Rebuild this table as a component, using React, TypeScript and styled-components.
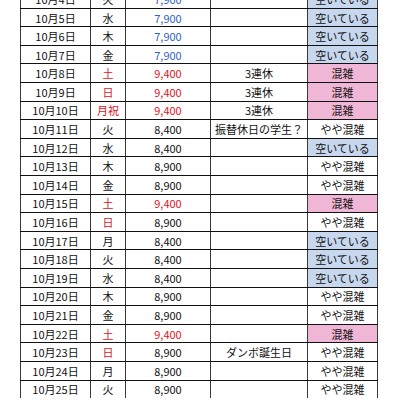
import React from "react";
import styled, { createGlobalStyle } from "styled-components";

const Global = createGlobalStyle`
  html, body { margin: 0; padding: 0; background: #fff; overflow: hidden; }
  body { font-family: "Noto Sans CJK JP", "Noto Sans", sans-serif; }
`;

type Tone = "black" | "blue" | "red";
type Status = "空いている" | "混雑" | "やや混雑";

interface Row {
  date: string;
  day: string;
  dayRed?: boolean;
  price: string;
  priceTone: Tone;
  note?: string;
  status: Status;
}

const rows: Row[] = [
  { date: "10月4日", day: "火", price: "7,900", priceTone: "blue", status: "空いている" },
  { date: "10月5日", day: "水", price: "7,900", priceTone: "blue", status: "空いている" },
  { date: "10月6日", day: "木", price: "7,900", priceTone: "blue", status: "空いている" },
  { date: "10月7日", day: "金", price: "7,900", priceTone: "blue", status: "空いている" },
  { date: "10月8日", day: "土", dayRed: true, price: "9,400", priceTone: "red", note: "3連休", status: "混雑" },
  { date: "10月9日", day: "日", dayRed: true, price: "9,400", priceTone: "red", note: "3連休", status: "混雑" },
  { date: "10月10日", day: "月祝", dayRed: true, price: "9,400", priceTone: "red", note: "3連休", status: "混雑" },
  { date: "10月11日", day: "火", price: "8,400", priceTone: "black", note: "振替休日の学生？", status: "やや混雑" },
  { date: "10月12日", day: "水", price: "8,400", priceTone: "black", status: "空いている" },
  { date: "10月13日", day: "木", price: "8,900", priceTone: "black", status: "やや混雑" },
  { date: "10月14日", day: "金", price: "8,900", priceTone: "black", status: "やや混雑" },
  { date: "10月15日", day: "土", dayRed: true, price: "9,400", priceTone: "red", status: "混雑" },
  { date: "10月16日", day: "日", dayRed: true, price: "8,900", priceTone: "black", status: "やや混雑" },
  { date: "10月17日", day: "月", price: "8,400", priceTone: "black", status: "空いている" },
  { date: "10月18日", day: "火", price: "8,400", priceTone: "black", status: "空いている" },
  { date: "10月19日", day: "水", price: "8,400", priceTone: "black", status: "空いている" },
  { date: "10月20日", day: "木", price: "8,900", priceTone: "black", status: "やや混雑" },
  { date: "10月21日", day: "金", price: "8,900", priceTone: "black", status: "やや混雑" },
  { date: "10月22日", day: "土", dayRed: true, price: "9,400", priceTone: "red", status: "混雑" },
  { date: "10月23日", day: "日", dayRed: true, price: "8,900", priceTone: "black", note: "ダンボ誕生日", status: "やや混雑" },
  { date: "10月24日", day: "月", price: "8,900", priceTone: "black", status: "やや混雑" },
  { date: "10月25日", day: "火", price: "8,900", priceTone: "black", status: "やや混雑" },
];

const toneColor: Record<Tone, string> = {
  black: "#111",
  blue: "#2f64c4",
  red: "#e0141e",
};

const statusFill: Record<Status, string> = {
  "空いている": "#c6d7ee",
  "混雑": "#efb6d6",
  "やや混雑": "#ffffff",
};

const Sheet = styled.div`
  margin: -10.9px 0 0 20px;
  width: 358px;
  display: flex;
  flex-direction: column;
`;

const TableRow = styled.div`
  display: grid;
  grid-template-columns: 70px 35px 85px 97px 71px;
  height: 18.6px;
  border-top: 1px solid #111;
  box-sizing: border-box;
`;

const Cell = styled.div<{ $color?: string; $fill?: string; $last?: boolean }>`
  display: flex;
  align-items: center;
  justify-content: center;
  border-left: 1px solid #3a3a3a;
  ${(p) => (p.$last ? "border-right: 1px solid #3a3a3a;" : "")}
  background: ${(p) => p.$fill ?? "transparent"};
  color: ${(p) => p.$color ?? "#111"};
  font-size: 11px;
  line-height: 1;
  white-space: nowrap;
  overflow: hidden;
  box-sizing: border-box;
  padding-top: 1px;
`;

export default function App() {
  return (
    <>
      <Global />
      <Sheet>
        {rows.map((r) => (
          <TableRow key={r.date}>
            <Cell>{r.date}</Cell>
            <Cell $color={r.dayRed ? toneColor.red : undefined}>{r.day}</Cell>
            <Cell $color={toneColor[r.priceTone]}>{r.price}</Cell>
            <Cell>{r.note ?? ""}</Cell>
            <Cell $last $fill={statusFill[r.status]}>{r.status}</Cell>
          </TableRow>
        ))}
      </Sheet>
    </>
  );
}
